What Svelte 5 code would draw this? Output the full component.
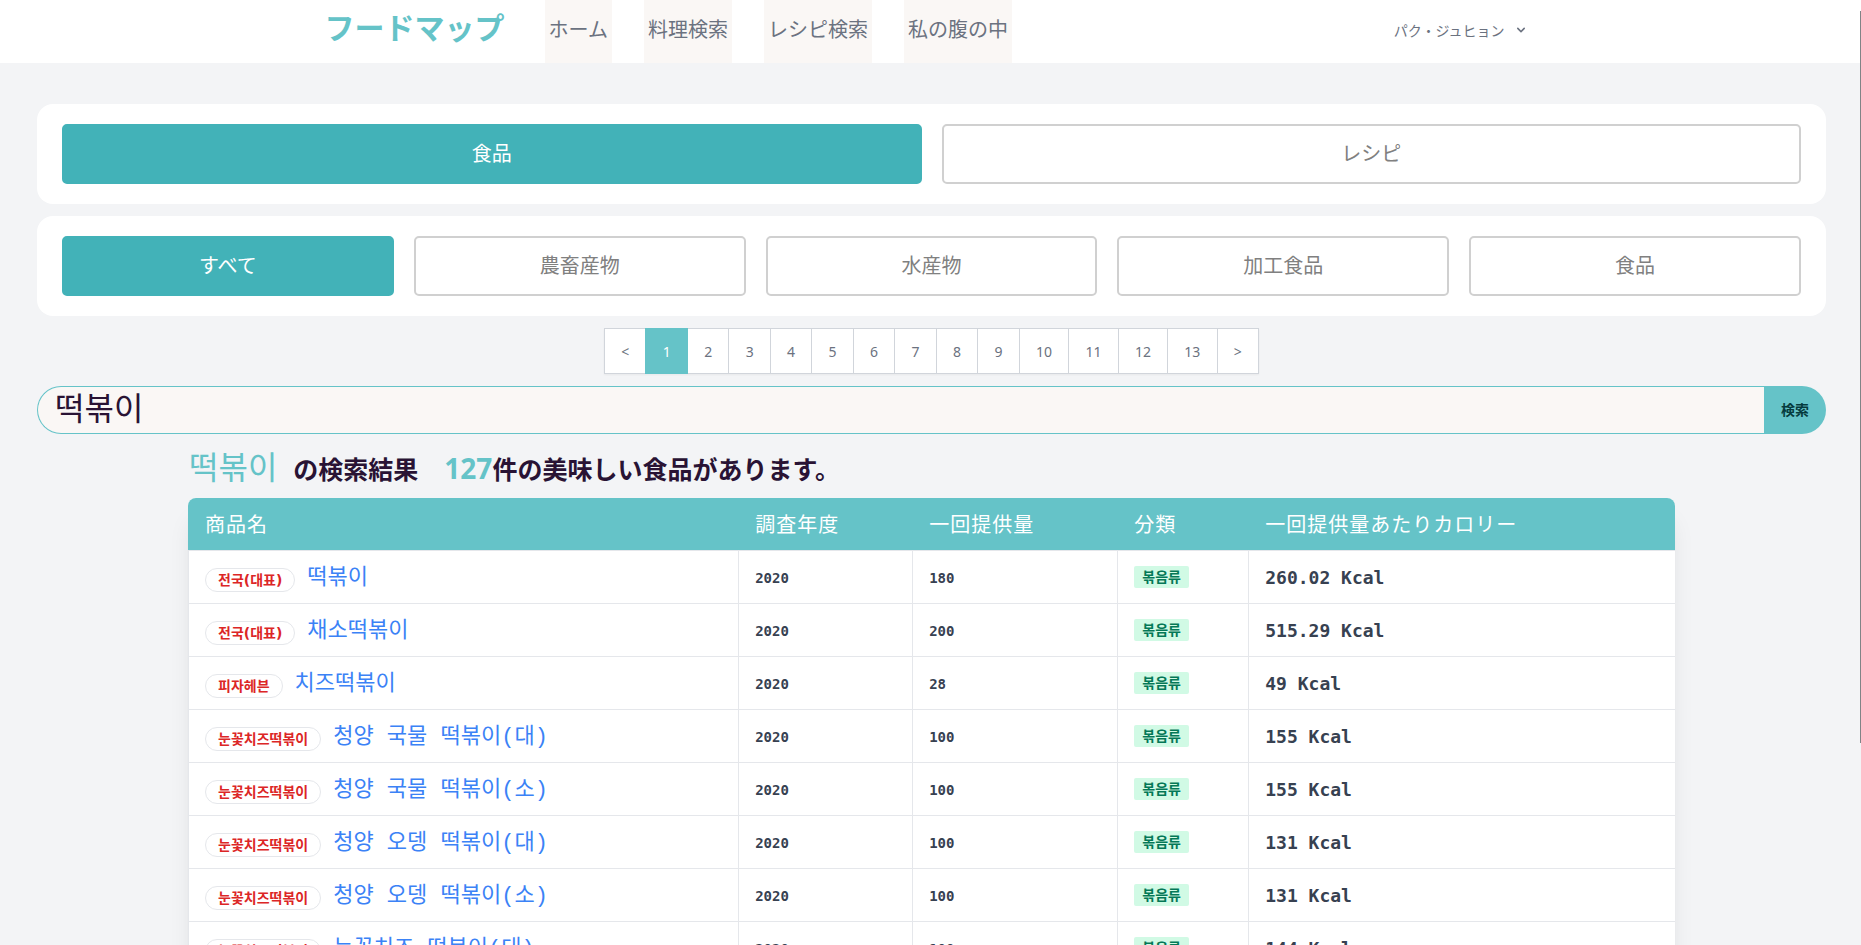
<script lang="ts">
  type Food = {
    maker: string;
    name: string;
    year: number;
    serving: number;
    category: string;
    kcal: number;
  };

  const links = ['ホーム', '料理検索', 'レシピ検索', '私の腹の中'];
  const kinds = ['食品', 'レシピ'];
  const categories = ['すべて', '農畜産物', '水産物', '加工食品', '食品'];
  const pages = Array.from({ length: 13 }, (_, i) => i + 1);
  const columns = ['商品名', '調査年度', '一回提供量', '分類', '一回提供量あたりカロリー'];

  const foods: Food[] = [
    { maker: '전국(대표)', name: '떡볶이', year: 2020, serving: 180, category: '볶음류', kcal: 260.02 },
    { maker: '전국(대표)', name: '채소떡볶이', year: 2020, serving: 200, category: '볶음류', kcal: 515.29 },
    { maker: '피자헤븐', name: '치즈떡볶이', year: 2020, serving: 28, category: '볶음류', kcal: 49 },
    { maker: '눈꽃치즈떡볶이', name: '청양 국물 떡볶이(대)', year: 2020, serving: 100, category: '볶음류', kcal: 155 },
    { maker: '눈꽃치즈떡볶이', name: '청양 국물 떡볶이(소)', year: 2020, serving: 100, category: '볶음류', kcal: 155 },
    { maker: '눈꽃치즈떡볶이', name: '청양 오뎅 떡볶이(대)', year: 2020, serving: 100, category: '볶음류', kcal: 131 },
    { maker: '눈꽃치즈떡볶이', name: '청양 오뎅 떡볶이(소)', year: 2020, serving: 100, category: '볶음류', kcal: 131 },
    { maker: '눈꽃치즈떡볶이', name: '눈꽃치즈 떡볶이(대)', year: 2020, serving: 100, category: '볶음류', kcal: 144 },
  ];

  let kind = $state('食品');
  let category = $state(0);
  let page = $state(1);
  let keyword = $state('떡볶이');
  let searched = $state('떡볶이');

  function search(e: SubmitEvent) {
    e.preventDefault();
    searched = keyword;
  }
</script>

<div class="page">
  <header>
    <div class="bar">
      <a class="logo" href="#home">フードマップ</a>
      <nav>
        {#each links as link}
          <a href="#{link}">{link}</a>
        {/each}
      </nav>
      <button class="user" type="button">
        パク・ジュヒョン
        <svg viewBox="0 0 20 20" width="16" height="16" aria-hidden="true">
          <path
            fill="currentColor"
            fill-rule="evenodd"
            d="M5.293 7.293a1 1 0 011.414 0L10 10.586l3.293-3.293a1 1 0 111.414 1.414l-4 4a1 1 0 01-1.414 0l-4-4a1 1 0 010-1.414z"
          />
        </svg>
      </button>
    </div>
  </header>

  <main>
    <div class="tabs">
      {#each kinds as k}
        <button type="button" class:on={kind === k} onclick={() => (kind = k)}>{k}</button>
      {/each}
    </div>

    <div class="tabs">
      {#each categories as c, i}
        <button type="button" class:on={category === i} onclick={() => (category = i)}>{c}</button>
      {/each}
    </div>

    <div class="pager">
      <button type="button" onclick={() => (page = Math.max(1, page - 1))}>&lt;</button>
      {#each pages as p}
        <button type="button" class:current={page === p} onclick={() => (page = p)}>{p}</button>
      {/each}
      <button type="button" onclick={() => (page = Math.min(pages.length, page + 1))}>&gt;</button>
    </div>

    <form class="search" onsubmit={search}>
      <input type="text" aria-label="検索" bind:value={keyword} />
      <button type="submit">検索</button>
    </form>

    <section class="results">
      <h1>
        <span class="keyword">{searched}</span>
        <span>の検索結果</span>
        <span class="total"><b>127</b>件の美味しい食品があります。</span>
      </h1>

      <table>
        <thead>
          <tr>
            {#each columns as column}
              <th scope="col">{column}</th>
            {/each}
          </tr>
        </thead>
        <tbody>
          {#each foods as food}
            <tr>
              <td>
                <div class="food">
                  <span class="maker">{food.maker}</span>
                  <a href="#{food.name}">{food.name}</a>
                </div>
              </td>
              <td class="num">{food.year}</td>
              <td class="num">{food.serving}</td>
              <td><span class="badge">{food.category}</span></td>
              <td class="kcal">{food.kcal} Kcal</td>
            </tr>
          {/each}
        </tbody>
      </table>
    </section>
  </main>

  <div class="thumb"></div>
</div>

<style>
  :global(body) {
    background: #f3f4f6;
  }
  .page {
    position: relative;
    height: 100vh;
    overflow: hidden;
    background: #f3f4f6;
    color: #291334;
    font-family: 'Noto Sans CJK JP', 'Noto Sans CJK KR', sans-serif;
  }
  .page *,
  .page {
    box-sizing: border-box;
  }
  button,
  input {
    margin: 0;
    font: inherit;
  }
  button {
    cursor: pointer;
  }
  a {
    text-decoration: none;
  }

  header {
    background: #fff;
  }
  .bar {
    display: flex;
    align-items: center;
    max-width: 1280px;
    height: 63px;
    margin: 0 auto;
    padding: 0 32px;
  }
  .logo {
    color: #65c3c8;
    font-size: 30px;
    font-weight: 700;
    line-height: 36px;
    padding: 0 0 12px 2px;
  }
  nav {
    display: flex;
    gap: 32px;
    height: 100%;
    margin-left: 40px;
  }
  nav a {
    display: flex;
    align-items: center;
    padding: 0 4px 6px;
    background: #faf7f5;
    color: #6b7280;
    font-size: 20px;
  }
  .user {
    display: flex;
    align-items: center;
    gap: 8px;
    margin-left: auto;
    padding: 0 10px 4px;
    border: 0;
    background: none;
    color: #6b7280;
    font-size: 14px;
  }

  main {
    display: flex;
    flex-direction: column;
    gap: 12px;
    padding: 41px 35px 0 37px;
  }
  .tabs {
    display: flex;
    gap: 20px;
    padding: 20px 25px;
    border-radius: 16px;
    background: #fff;
  }
  .tabs button {
    flex: 1 1 0;
    height: 60px;
    padding: 0 0 4px;
    border: 2px solid #d0d0d0;
    border-radius: 5px;
    background: #fff;
    color: #808080;
    font-size: 20px;
  }
  .tabs .on {
    border-color: #42b2b8;
    background: #42b2b8;
    color: #fff;
  }

  .pager {
    display: flex;
    align-self: center;
    width: 655px;
    padding-left: 1px;
    box-shadow: 0 1px 2px rgba(0, 0, 0, 0.05);
  }
  .pager button {
    flex: 1 1 auto;
    height: 46px;
    margin-left: -1px;
    padding: 0 15px;
    border: 1px solid #d1d5db;
    background: #fff;
    color: #6b7280;
    font-family: 'Noto Sans', sans-serif;
    font-size: 14px;
  }
  .pager .current {
    z-index: 1;
    border-color: #65c3c8;
    background: #65c3c8;
    color: #fff;
  }

  .search {
    display: flex;
    height: 48px;
  }
  .search input {
    flex: 1;
    min-width: 0;
    padding: 0 17px 8px;
    border: 1px solid #65c3c8;
    border-right: 0;
    border-radius: 24px 0 0 24px;
    outline: none;
    background: #faf7f5;
    color: #291334;
    font-family: 'Noto Sans CJK KR', sans-serif;
    font-size: 32px;
    line-height: 36px;
  }
  .search button {
    width: 62px;
    padding: 0 0 2px;
    border: 0;
    border-radius: 0 24px 24px 0;
    background: #65c3c8;
    color: #053b3e;
    font-size: 14px;
    font-weight: 700;
  }

  .results {
    margin: 0 151px;
  }
  h1 {
    display: flex;
    align-items: baseline;
    height: 52px;
    margin: 0;
    font-size: 25px;
    font-weight: 700;
    line-height: 38px;
  }
  .keyword {
    margin: 0 16px 0 1px;
    color: #65c3c8;
    font-family: 'Noto Sans CJK KR', sans-serif;
    font-size: 32px;
    font-weight: 400;
  }
  .total {
    margin-left: 26px;
  }
  .total b {
    color: #65c3c8;
    font-family: 'Open Sans', sans-serif;
    font-size: 28px;
    font-weight: 700;
  }

  table {
    width: 100%;
    border-spacing: 0;
    border-radius: 8px 8px 0 0;
    table-layout: fixed;
    overflow: hidden;
    background: #fff;
    box-shadow:
      0 20px 25px -5px rgba(0, 0, 0, 0.1),
      0 10px 10px -5px rgba(0, 0, 0, 0.04);
  }
  th {
    height: 52px;
    padding: 0 16px 2px 17px;
    background: #65c3c8;
    color: #fff;
    font-size: 20px;
    font-weight: 400;
    letter-spacing: 0.05em;
    text-align: left;
  }
  th:nth-child(1) {
    width: 37%;
  }
  th:nth-child(2) {
    width: 11.7%;
  }
  th:nth-child(3) {
    width: 13.8%;
  }
  th:nth-child(4) {
    width: 8.8%;
  }
  td {
    height: 53px;
    padding: 0 16px;
    border-top: 1px solid #e5e7eb;
    border-left: 1px solid #e5e7eb;
    color: #374151;
  }
  .food {
    display: flex;
    align-items: center;
    gap: 12px;
    white-space: nowrap;
  }
  .maker {
    height: 24px;
    margin-top: 6px;
    padding: 0 12px;
    border: 1px solid #e5e7eb;
    border-radius: 12px;
    color: #dc2626;
    font-family: 'DejaVu Sans', 'Noto Sans CJK KR', sans-serif;
    font-size: 14px;
    font-weight: 700;
    line-height: 22px;
  }
  .food a {
    padding-top: 4px;
    color: #3b82f6;
    font-family: 'Liberation Mono', 'Noto Sans CJK KR', monospace;
    font-size: 22px;
    line-height: 32px;
  }
  .num,
  .kcal {
    font-family: 'DejaVu Sans Mono', monospace;
    font-weight: 700;
  }
  .num {
    padding-top: 2px;
    font-size: 14px;
  }
  .kcal {
    font-size: 18px;
  }
  .badge {
    display: block;
    width: fit-content;
    padding: 0 8px 2px;
    border-radius: 2px;
    background: #d1fae5;
    color: #047857;
    font-family: 'Noto Sans CJK KR', sans-serif;
    font-size: 14px;
    font-weight: 700;
    line-height: 20px;
  }

  /* scroll thumb on the window edge */
  .thumb {
    position: absolute;
    top: 11px;
    right: 0;
    width: 1px;
    height: calc(78% - 5px);
    background: #808486;
  }
</style>
